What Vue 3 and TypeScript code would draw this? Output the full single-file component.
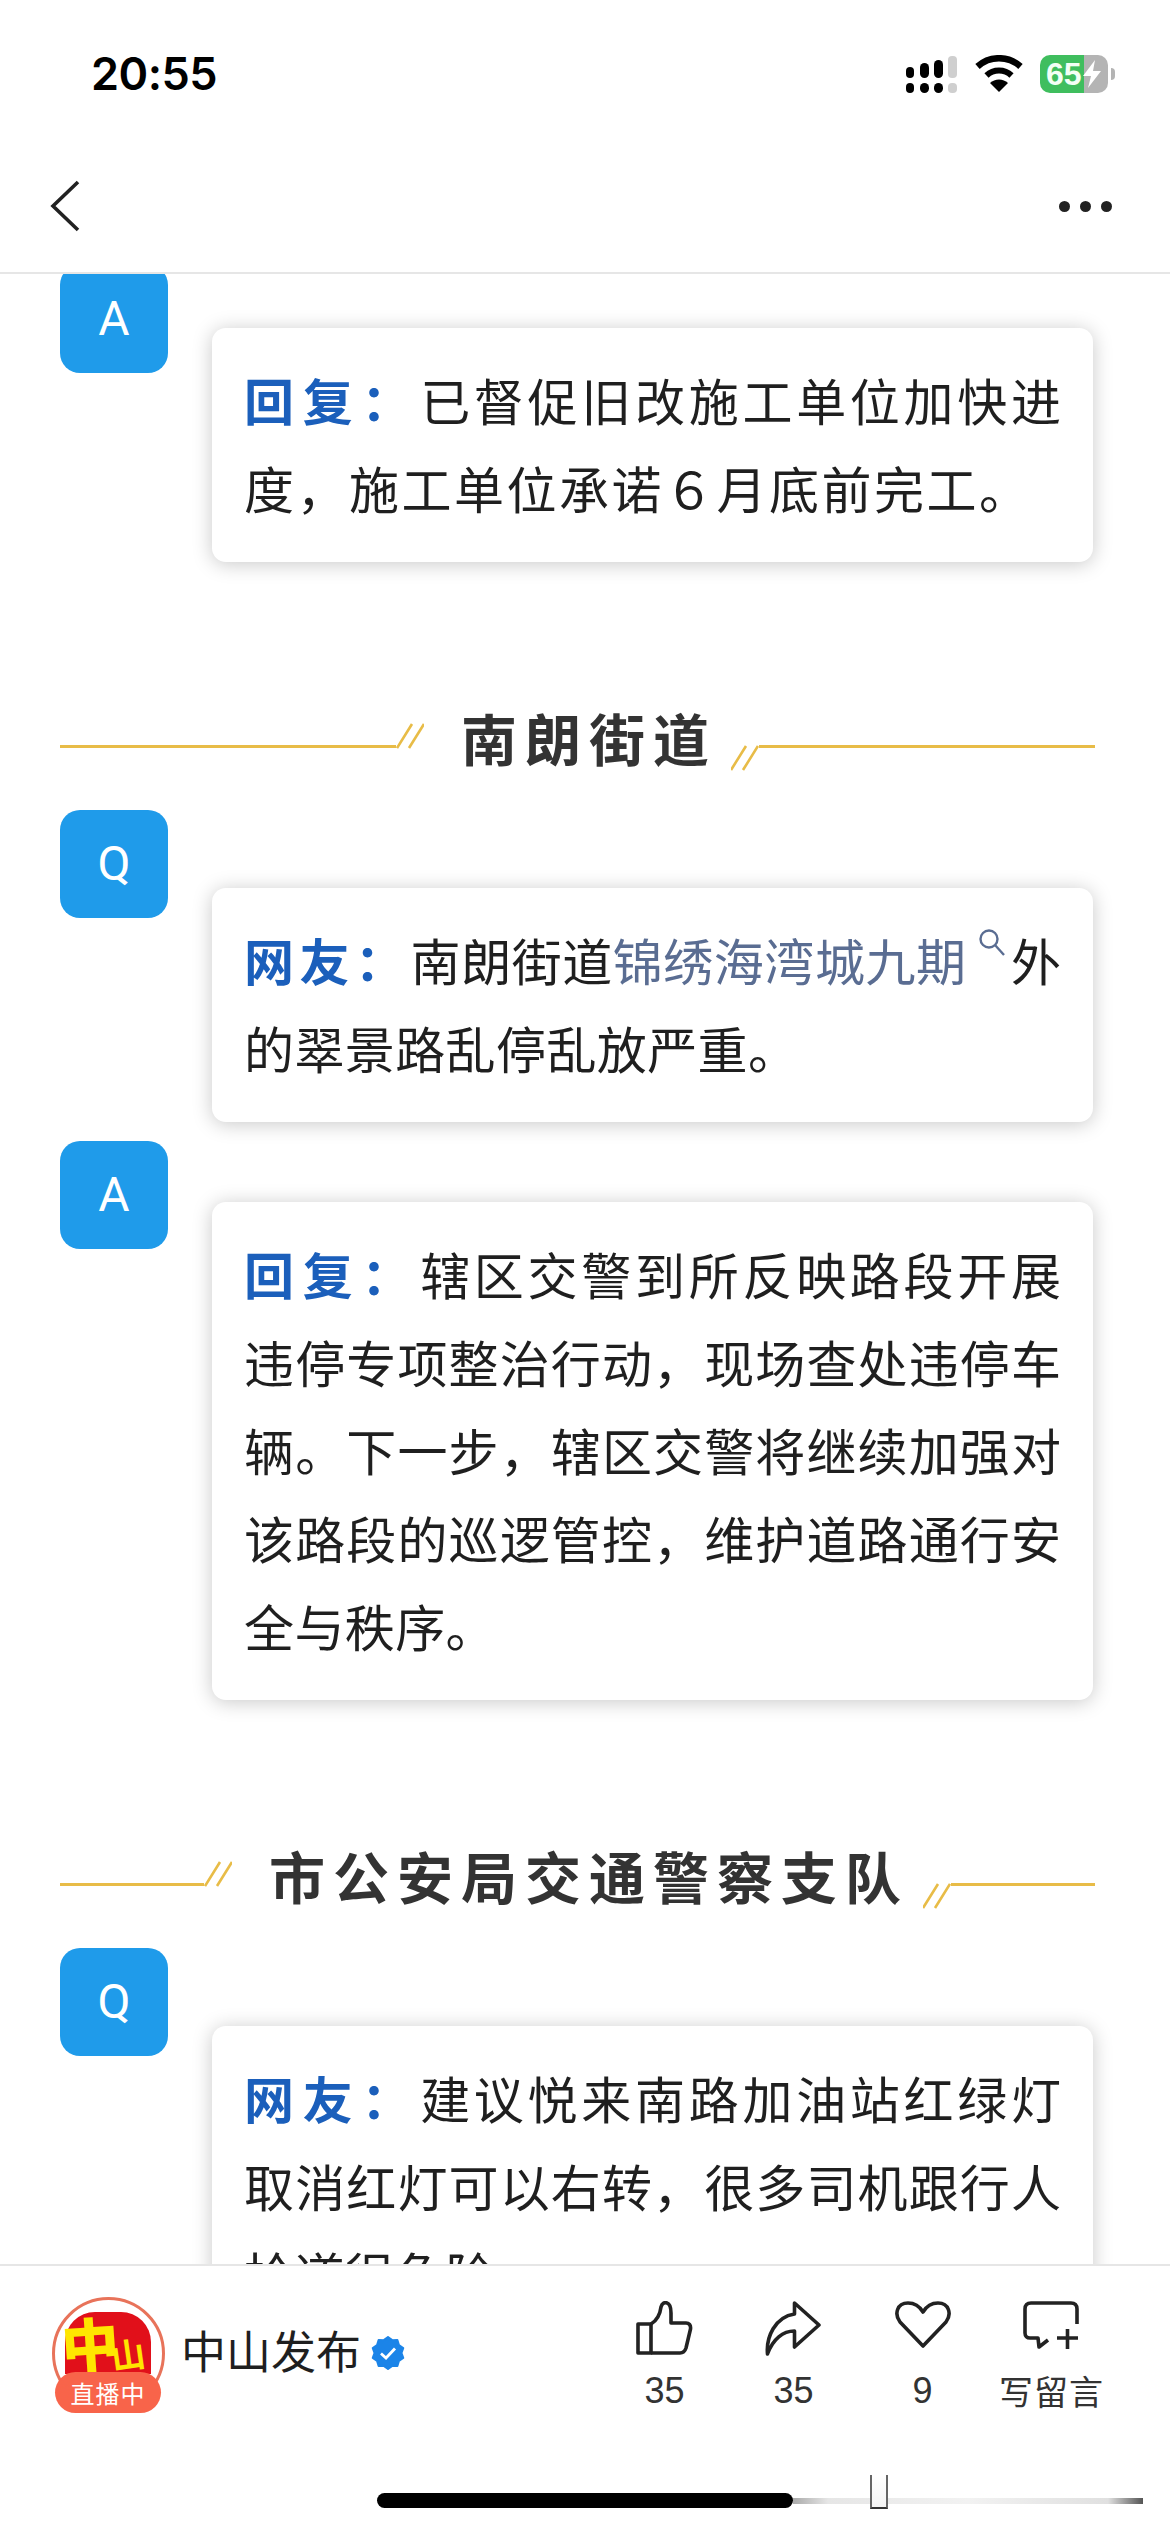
<template>
  <div class="page">
    <!-- 状态栏 -->
    <div class="status-bar">
      <span class="time">20:55</span>
      <div class="status-icons">
        <svg class="signal" width="52" height="38" viewBox="0 0 52 38">
          <rect x="0" y="12" width="8" height="11" rx="4" fill="#000" />
          <rect x="14" y="8" width="9" height="15" rx="4.5" fill="#000" />
          <rect x="28" y="5" width="9" height="18" rx="4.5" fill="#000" />
          <rect x="42" y="1" width="9" height="22" rx="4" fill="#cfcfcf" />
          <rect x="0" y="28" width="8" height="10" rx="4" fill="#000" />
          <rect x="14" y="28" width="9" height="10" rx="4.5" fill="#000" />
          <rect x="28" y="28" width="9" height="10" rx="4.5" fill="#000" />
          <rect x="42" y="28" width="9" height="10" rx="4" fill="#cfcfcf" />
        </svg>
        <svg class="wifi" width="48" height="37" viewBox="0 0 48 37">
          <path d="M2.5 11.5 A32 32 0 0 1 45.5 11.5" fill="none" stroke="#000" stroke-width="6.5" />
          <path d="M11.5 20.5 A18 18 0 0 1 36.5 20.5" fill="none" stroke="#000" stroke-width="6" />
          <path d="M24 37 L15 28 A13 13 0 0 1 33 28 Z" fill="#000" />
        </svg>
        <div class="battery">
          <span class="battery-num">65</span>
          <svg class="bolt" width="20" height="28" viewBox="0 0 20 28">
            <path d="M13 0 L1 16 H9 L6 28 L19 11 H11 Z" fill="#fff" />
          </svg>
        </div>
        <span class="battery-nub"></span>
      </div>
    </div>

    <!-- 导航栏 -->
    <div class="nav-bar">
      <svg width="30" height="52" viewBox="0 0 30 52">
        <path d="M28 2 L3 26 L28 50" fill="none" stroke="#222" stroke-width="3.6" />
      </svg>
      <div class="more">
        <i></i><i></i><i></i>
      </div>
    </div>

    <!-- 正文，已滚动 -->
    <div class="article">
      <div class="article-inner">
        <section v-for="(sec, i) in sections" :key="i">
          <div v-if="sec.title" class="sec-head">
            <div class="rule rule-left">
              <span class="rule-line"></span>
              <svg width="28" height="26" viewBox="0 0 28 26">
                <path d="M1 25 L16 1 M13 25 L28 1" fill="none" stroke="#e8bc47" stroke-width="2.6" />
              </svg>
            </div>
            <h2 class="sec-title">{{ sec.title }}</h2>
            <div class="rule rule-right">
              <svg width="28" height="26" viewBox="0 0 28 26">
                <path d="M0 25 L15 1 M12 25 L27 1" fill="none" stroke="#e8bc47" stroke-width="2.6" />
              </svg>
              <span class="rule-line"></span>
            </div>
          </div>

          <div v-for="(item, j) in sec.items" :key="j" :class="['qa', item.kind === 'Q' ? 'qa-q' : 'qa-a']">
            <div class="qa-badge">{{ item.kind }}</div>
            <div class="qa-card">
              <p
                v-for="(line, k) in item.lines"
                :key="k"
                :class="['qa-line', { 'is-last': k === item.lines.length - 1 }]"
                :style="k === item.lines.length - 1 && item.lastSpacing ? { letterSpacing: item.lastSpacing + 'px' } : undefined"
              >
                <span v-if="k === 0" class="qa-label">{{ item.label }}</span>
                <template v-for="(seg, m) in line" :key="m">
                  <span v-if="seg.link" class="qa-link">{{ seg.text }}<svg class="qa-search" width="28" height="28" viewBox="0 0 28 28">
                    <circle cx="11" cy="10" r="8.5" fill="none" stroke="#5a6d92" stroke-width="2.4" />
                    <path d="M17 16 L26 26" stroke="#5a6d92" stroke-width="2.4" />
                  </svg></span>
                  <span v-else>{{ seg.text }}</span>
                </template>
              </p>
            </div>
          </div>
        </section>
      </div>
    </div>

    <!-- 底部操作栏 -->
    <div class="bottom-bar">
      <div class="bottom-row">
        <div class="account">
          <div class="avatar">
            <div class="logo">
              <span class="logo-big">中</span>
              <span class="logo-small">山</span>
            </div>
            <span class="live-pill">直播中</span>
          </div>
          <span class="account-name">中山发布</span>
          <svg class="seal" width="34" height="34" viewBox="0 0 34 34">
            <polygon :points="sealPoints" fill="#1b84e8" stroke="#1b84e8" stroke-width="2" stroke-linejoin="round" />
            <path d="M10 17.5 L15 22 L24 12.5" fill="none" stroke="#fff" stroke-width="2.8" />
          </svg>
        </div>
        <div class="actions">
          <div class="action">
            <svg width="58" height="56" viewBox="0 0 58 56">
              <g fill="none" stroke="#222" stroke-width="3.6" stroke-linejoin="round">
                <path d="M2 23 H15 V52 H2 Z" />
                <path d="M15 23 C20 20 24 14 25 6 C26 2 29 1 31 2 C34 3 35 8 35 12 V22 H50 C53 22 55 24 54.5 28 L50 47 C49 50 47 52 44 52 H15" />
              </g>
            </svg>
            <span>35</span>
          </div>
          <div class="action">
            <svg width="58" height="56" viewBox="0 0 58 56">
              <path d="M29.5 2 L54 24 L29.5 46 V30 C18 30 8 38 2.5 53 C1 36 10 16 29.5 13 Z" fill="none" stroke="#222" stroke-width="3.6" stroke-linejoin="round" />
            </svg>
            <span>35</span>
          </div>
          <div class="action">
            <svg width="58" height="48" viewBox="0 0 58 48">
              <path d="M29 45 L6 21 C0 13 3 2 14 2 C21 2 26 6 29 11 C32 6 37 2 44 2 C55 2 58 13 52 21 Z" fill="none" stroke="#222" stroke-width="3.6" stroke-linejoin="round" />
            </svg>
            <span>9</span>
          </div>
          <div class="action">
            <svg width="58" height="50" viewBox="0 0 58 50">
              <g fill="none" stroke="#222" stroke-width="3.6" stroke-linejoin="round">
                <path d="M54 23 V8 C54 4 52 2 48 2 H8 C4 2 2 4 2 8 V32 C2 35 4 37 7 37 H15 L16 46 L25 39" />
                <path d="M34 37 H55 M44.500 28 V48" />
              </g>
            </svg>
            <span class="action-cjk">写留言</span>
          </div>
        </div>
      </div>

      <div class="home-row">
        <span class="home-bar"></span>
        <span class="home-tail"><i></i></span>
      </div>
    </div>
  </div>
</template>

<script setup lang="ts">
interface Seg {
  text: string
  link?: boolean
}
interface QaItem {
  kind: 'Q' | 'A'
  label: string
  lines: Seg[][]
  lastSpacing?: number
}
interface Section {
  title: string
  items: QaItem[]
}

const t = (text: string): Seg[] => [{ text }]

const sections: Section[] = [
  {
    title: '',
    items: [
      {
        kind: 'A',
        label: '回复：',
        lines: [t('已督促旧改施工单位加快进'), t('度，施工单位承诺６月底前完工。')],
        lastSpacing: 2.5,
      },
    ],
  },
  {
    title: '南朗街道',
    items: [
      {
        kind: 'Q',
        label: '网友：',
        lines: [
          [{ text: '南朗街道' }, { text: '锦绣海湾城九期', link: true }, { text: '外' }],
          t('的翠景路乱停乱放严重。'),
        ],
      },
      {
        kind: 'A',
        label: '回复：',
        lines: [
          t('辖区交警到所反映路段开展'),
          t('违停专项整治行动，现场查处违停车'),
          t('辆。下一步，辖区交警将继续加强对'),
          t('该路段的巡逻管控，维护道路通行安'),
          t('全与秩序。'),
        ],
      },
    ],
  },
  {
    title: '市公安局交通警察支队',
    items: [
      {
        kind: 'Q',
        label: '网友：',
        lines: [
          t('建议悦来南路加油站红绿灯'),
          t('取消红灯可以右转，很多司机跟行人'),
          t('抢道很危险。'),
        ],
      },
    ],
  },
]

// 认证徽章的锯齿圆
const sealPoints = Array.from({ length: 20 }, (_, i) => {
  const r = i % 2 === 0 ? 16 : 13.5
  const a = (Math.PI * 2 * i) / 20
  return `${(17 + r * Math.sin(a)).toFixed(2)},${(17 - r * Math.cos(a)).toFixed(2)}`
}).join(' ')
</script>

<style>
html,
body {
  margin: 0;
  background: #fff;
}
</style>

<style scoped>
.page {
  width: 1170px;
  height: 2532px;
  display: flex;
  flex-direction: column;
  overflow: hidden;
  background: #fff;
  font-family: "Noto Sans CJK SC", "Liberation Sans", sans-serif;
}

/* 状态栏 */
.status-bar {
  height: 148px;
  flex-shrink: 0;
  display: flex;
  justify-content: space-between;
  align-items: flex-start;
  padding: 0 55px 0 91px;
  box-sizing: border-box;
}
.time {
  margin-top: 46px;
  font-family: Inter, "Liberation Sans", sans-serif;
  font-size: 45px;
  line-height: 56px;
  font-weight: 600;
  letter-spacing: -0.5px;
  color: #000;
}
.status-icons {
  display: flex;
  align-items: flex-start;
  margin-top: 55px;
}
.wifi {
  margin-left: 17px;
}
.battery {
  margin-left: 17px;
  width: 68px;
  height: 38px;
  border-radius: 10px;
  background: linear-gradient(90deg, #3fbe5e 65%, #b4b4b4 65%);
  display: flex;
  align-items: center;
  padding-left: 6px;
  box-sizing: border-box;
}
.battery-num {
  font-family: "Liberation Sans", sans-serif;
  font-size: 32px;
  line-height: 38px;
  font-weight: 700;
  color: #f3fff5;
}
.battery-nub {
  width: 4px;
  height: 12px;
  margin: 13px 0 0 3px;
  border-radius: 0 4px 4px 0;
  background: #b4b4b4;
}

/* 导航栏 */
.nav-bar {
  height: 126px;
  flex-shrink: 0;
  box-sizing: border-box;
  border-bottom: 2px solid #e6e6e6;
  display: flex;
  justify-content: space-between;
  align-items: center;
  padding: 0 58px 8px 50px;
}
.more {
  display: flex;
  gap: 10px;
}
.more i {
  width: 11px;
  height: 11px;
  border-radius: 50%;
  background: #222;
}

/* 正文 */
.article {
  flex: 1;
  min-height: 0;
  overflow: hidden;
}
.article-inner {
  margin-top: -9px;
  padding: 0 75px 0 60px;
}
.sec-head {
  display: flex;
  height: 80px;
  margin: 135px 0 33px;
  width: 1035px;
}
.sec-title {
  margin: 0;
  font-size: 56px;
  line-height: 80px;
  font-weight: 700;
  letter-spacing: 8px;
  color: #333;
  white-space: nowrap;
}
.rule {
  flex: 1;
  display: flex;
  align-items: flex-start;
}
.rule-left {
  margin-top: 26px;
  height: 26px;
  align-items: flex-end;
  margin-right: 37px;
}
.rule-right {
  margin-top: 48px;
  margin-left: 14px;
}
.rule-line {
  flex: 1;
  height: 3px;
  background: #e8bc47;
}
.rule-left .rule-line {
  margin-bottom: 1px;
}
.qa {
  display: flex;
  align-items: flex-start;
  gap: 44px;
}
.qa-a {
  margin-top: 19px;
}
section:first-child .qa-a {
  margin-top: 0;
}
.qa-badge {
  width: 108px;
  height: 108px;
  flex-shrink: 0;
  border-radius: 20px;
  background: #1f9bea;
  color: #fff;
  font-family: Roboto, "Liberation Sans", sans-serif;
  font-size: 48px;
  line-height: 108px;
  text-align: center;
}
.qa-card {
  width: 881px;
  box-sizing: border-box;
  padding: 27px 32px 31px;
  background: #fff;
  border-radius: 14px;
  box-shadow: 0 2px 20px rgba(0, 0, 0, 0.22);
}
.qa-q .qa-card {
  margin-top: 78px;
}
.qa-a .qa-card {
  margin-top: 63px;
}
section + section .qa-a .qa-card {
  margin-top: 61px;
}
.qa-line {
  margin: 0;
  font-size: 50px;
  line-height: 88px;
  height: 88px;
  letter-spacing: 0;
  color: #1f1f1f;
  text-align: justify;
  text-align-last: justify;
  white-space: nowrap;
}
.qa-line.is-last {
  text-align-last: left;
  letter-spacing: 0.4px;
}
.qa-label {
  font-weight: 700;
  letter-spacing: 5px;
  color: #1b5fbb;
}
.qa-link {
  color: #5a6d92;
}
.qa-search {
  margin: 0 4px 0 12px;
  vertical-align: 24px;
}

/* 底部操作栏 */
.bottom-bar {
  height: 268px;
  flex-shrink: 0;
  box-sizing: border-box;
  border-top: 2px solid #e6e6e6;
  background: #fff;
  position: relative;
  padding-top: 29px;
}
.bottom-row {
  display: flex;
  justify-content: space-between;
  align-items: flex-start;
  height: 118px;
  padding: 0 54px 0 52px;
}
.account {
  display: flex;
  align-items: center;
  margin-top: 2px;
}
.avatar {
  position: relative;
  width: 113px;
  height: 116px;
  flex-shrink: 0;
}
.avatar::before {
  content: "";
  position: absolute;
  left: 0;
  top: 0;
  width: 113px;
  height: 113px;
  box-sizing: border-box;
  border: 3px solid #e8735a;
  border-radius: 50%;
}
.logo {
  position: absolute;
  left: 13px;
  top: 15px;
  width: 86px;
  height: 62px;
  background: #e1101a;
  border-radius: 30px 30px 0 0;
}
.logo-big {
  position: absolute;
  left: -4px;
  top: -6px;
  font-size: 58px;
  line-height: 72px;
  font-weight: 900;
  color: #ffe600;
  transform: rotate(-4deg);
}
.logo-small {
  position: absolute;
  left: 46px;
  top: 22px;
  font-size: 34px;
  line-height: 40px;
  font-weight: 700;
  color: #ffe600;
  transform: rotate(-8deg);
}
.live-pill {
  position: absolute;
  left: 3px;
  top: 75px;
  width: 106px;
  height: 41px;
  border-radius: 21px;
  background: #f8644a;
  color: #fff;
  font-size: 24px;
  line-height: 41px;
  letter-spacing: 1px;
  text-align: center;
}
.account-name {
  margin: 0 0 11px 16px;
  font-size: 45px;
  line-height: 60px;
  letter-spacing: 0;
  color: #1f1f1f;
}
.seal {
  margin: 0 0 4px 10px;
}
.actions {
  display: flex;
}
.action {
  width: 129px;
  height: 116px;
  display: flex;
  flex-direction: column;
  align-items: center;
  justify-content: space-between;
  font-family: "Liberation Sans", sans-serif;
  font-size: 36px;
  line-height: 40px;
  color: #333;
}
.action svg {
  margin: 6px 0 0;
}
.action-cjk {
  font-family: "Noto Sans CJK SC", sans-serif;
  font-size: 34px;
  letter-spacing: 1px;
  white-space: nowrap;
}
.home-row {
  display: flex;
  align-items: center;
  margin-top: 80px;
  padding-left: 377px;
}
.home-bar {
  width: 416px;
  height: 15px;
  border-radius: 8px;
  background: #000;
}
.home-tail {
  position: relative;
  width: 350px;
  height: 6px;
  background: linear-gradient(90deg, #aaa, #e6e6e6 10%, #f2f2f2 50%, #e0e0e0 90%, #555);
}
.home-tail i {
  position: absolute;
  left: 77px;
  bottom: -5px;
  width: 14px;
  height: 32px;
  border-left: 2px solid #666;
  border-right: 2px solid #666;
  border-bottom: 2px solid #333;
  background: linear-gradient(#fff, #f4f4f4);
}
</style>
